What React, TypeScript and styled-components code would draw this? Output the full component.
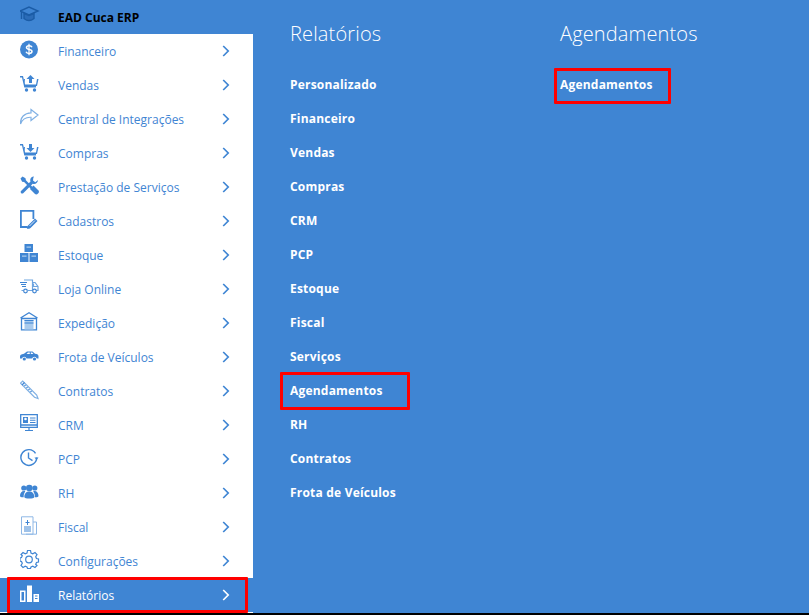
import { ReactNode } from 'react'
import styled, { createGlobalStyle } from 'styled-components'

const blue = '#3f85d3'

const GlobalStyle = createGlobalStyle`
  html, body {
    margin: 0;
    padding: 0;
    background: ${blue};
  }
  body {
    font-family: "Open Sans", "Liberation Sans", sans-serif;
  }
`

const Page = styled.div`
  width: 809px;
  height: 615px;
  display: flex;
  flex-direction: column;
  overflow: hidden;
`

const Body = styled.div`
  display: flex;
  height: 613px;
`

const BottomLine = styled.div`
  height: 2px;
  background: #000;
`

const Sidebar = styled.nav`
  width: 253px;
  display: flex;
  flex-direction: column;
  background: #fff;
`

const Brand = styled.div`
  height: 34px;
  flex: none;
  display: flex;
  align-items: center;
  padding-left: 20px;
  background: ${blue};
  color: #000;
  font-size: 12px;
  font-weight: 700;
`

const MenuRow = styled.div<{ $active?: boolean }>`
  height: 34px;
  flex: none;
  display: flex;
  align-items: center;
  padding-left: 20px;
  position: relative;
  font-size: 12px;
  color: ${(p) => (p.$active ? '#fff' : blue)};
  background: ${(p) => (p.$active ? blue : '#fff')};
`

const IconBox = styled.span`
  width: 20px;
  height: 20px;
  margin-right: 18px;
  margin-top: -3px;
  flex: none;
  display: block;
  svg {
    display: block;
  }
`

const Label = styled.span`
  flex: 1;
  margin-top: 1px;
`

const Chevron = styled.svg`
  width: 8px;
  height: 12px;
  margin-right: 23px;
`

const Marker = styled.span<{ $w: number; $h: number; $x: number; $y: number }>`
  position: absolute;
  left: ${(p) => p.$x}px;
  top: ${(p) => p.$y}px;
  width: ${(p) => p.$w}px;
  height: ${(p) => p.$h}px;
  box-sizing: border-box;
  border: 3px solid #f00;
  border-radius: 1px;
  pointer-events: none;
`

const Column = styled.section<{ $width: number }>`
  width: ${(p) => p.$width}px;
  flex: none;
  padding-left: 37px;
  display: flex;
  flex-direction: column;
  box-sizing: border-box;
`

const ColumnTitle = styled.h2`
  margin: 0 0 13px;
  height: 34px;
  padding-top: 20px;
  font-size: 20px;
  line-height: 28px;
  letter-spacing: 0.15px;
  font-weight: 300;
  color: #fff;
  box-sizing: content-box;
`

const LinkRow = styled.div`
  height: 34px;
  display: flex;
  align-items: center;
  position: relative;
  color: #fff;
  font-size: 12px;
  font-weight: 700;
  letter-spacing: 0.2px;
`

const Stroke = ({ children }: { children: ReactNode }) => (
  <svg width="20" height="20" viewBox="0 0 20 20" fill="none" stroke={blue} strokeWidth="1.2">
    {children}
  </svg>
)

const Solid = ({ children, color = blue }: { children: ReactNode; color?: string }) => (
  <svg width="20" height="20" viewBox="0 0 20 20" fill={color}>
    {children}
  </svg>
)

const Cart = ({ up }: { up?: boolean }) => (
  <Solid>
    <path d="M0 2h3l2.400 10h10.600v1.400H4.300L2 3.400H0z" />
    <path d="M4 5h1v5.500h11L17 5h1.500l-1.500 7H5z" />
    <circle cx="6.500" cy="16" r="1.700" />
    <circle cx="14.500" cy="16" r="1.700" />
    {up ? <path d="M10.500 1l4 4h-2.500v4h-3V5H6.500z" /> : <path d="M10.500 10l4-4h-2.500V2h-3v4H6.500z" />}
  </Solid>
)

const icons: Record<string, ReactNode> = {
  dollar: (
    <Solid>
      <circle cx="9" cy="9.500" r="9" />
      <path
        d="M12 7.300C11.500 6 10.500 5.700 9 5.700 7.500 5.700 6.500 6.500 6.500 7.600c0 2.600 5.500 1.400 5.500 4 0 1.100-1.200 1.800-3 1.800-1.500 0-2.500-.5-3-1.700"
        fill="none"
        stroke="#fff"
        strokeWidth="1.500"
      />
      <path d="M9 3.800v11.400" stroke="#fff" strokeWidth="1.200" />
    </Solid>
  ),
  cartUp: <Cart up />,
  share: (
    <Stroke>
      <path stroke="#7fb0e4" d="M11 1.500L18 7l-7 5.500V9.300C6 9 2.500 11 .5 16 0 9.500 4.500 5 11 4.800z" />
    </Stroke>
  ),
  cartDown: <Cart />,
  tools: (
    <Solid>
      <path d="M.5 2.500L2.500.5l3 1.800.4 2 9.600 9.600-1.800 1.800-9.600-9.600-2-.4z" />
      <path d="M13.500 9.500l5 5c1 1.200.2 2.300-.5 3-.8.700-1.900 1.400-3 .5l-5-5z" />
      <path d="M14 .5c-2.800 0-4.500 2.500-3.500 5L1 15c-1.200 1.300.9 3.400 2.200 2.200l9.500-9.500c2.500 1 5.300-.8 5.300-3.700l-2.700 2.200-2.300-1.700.3-2.600z" />
    </Solid>
  ),
  note: (
    <Stroke>
      <path strokeWidth="1.800" d="M7.500 17H.9V.9h12.500v8" />
      <path fill={blue} stroke="none" d="M8 15.500l7-7 2.500 2.500-7 7c-1 .8-2.500 1-3.500.8-.2-1-.1-2.500 1-3.300z" />
      <path stroke="#fff" strokeWidth=".8" d="M9.500 16l5.500-5.500" />
    </Stroke>
  ),
  boxes: (
    <Solid>
      <path d="M4.500 0H13v8H4.500zM0 9h8.500v9H0zM9.500 9H18v9H9.500z" />
      <path fill="#a9cbee" d="M6.500 2.500H11v1.200H6.500zM2 11.500h4.500v1.200H2zM11.500 11.500H16v1.200h-4.500z" />
    </Solid>
  ),
  truck: (
    <Stroke>
      <path stroke="#6ea5e0" d="M4 2h8.500v10M12.500 4.500h2.500l3 4v4h-2M3.500 12.500H1.500M8 12.500h5M13.500 5.500v3h4" />
      <path d="M0 4.500h7M1 6.500h5M2 8.500h4" />
      <circle cx="5.500" cy="13" r="1.800" />
      <circle cx="14.500" cy="13" r="1.800" />
    </Stroke>
  ),
  warehouse: (
    <Stroke>
      <path strokeWidth="1.300" d="M.5 6L9 .8 17.500 6M1.500 5.500v12.300h15V5.500M.8 6.500h16.400" />
      <path fill="#a9cbee" stroke="none" d="M4.500 8h9v9.500h-9z" />
      <path stroke={blue} d="M4.500 8.500h9M4.500 11h9" />
    </Stroke>
  ),
  car: (
    <Solid>
      <path d="M0 10.500c0-1.500 1-2.300 4-2.700L7 5.500h5.500l2.500 2.300c2.500.3 3.500.8 3.500 2.700v2h-1.800a2.300 2.300 0 0 0-4.500 0H6.500a2.300 2.300 0 0 0-4.500 0H0z" />
      <path fill="#fff" d="M8 6.600h1.800v1.400H6.500zM10.800 6.600h1.300l1.300 1.400h-2.600z" />
      <circle cx="4.300" cy="13" r="1.600" />
      <circle cx="14.500" cy="13" r="1.600" />
    </Solid>
  ),
  pen: (
    <Stroke>
      <path stroke="#7fb0e4" d="M.5 3.200L2.700 1l14 14 1.300 3.500-3.500-1.300z" />
      <path d="M2 5l2.500-2.500M4.500 6l1-1M6.500 8l1-1M8.500 10l1-1M10.500 12l1-1" />
    </Stroke>
  ),
  monitor: (
    <Stroke>
      <path strokeWidth="1.300" d="M.7.700h16.600v12.600H.7zM.7 11h16.600" />
      <path stroke={blue} d="M9 13.500v2.500M5 16.500h8" />
      <path fill={blue} stroke="none" d="M3 3h5v6H3zM10 3.500h5.500v1H10zM10 5.700h5.500v1H10zM10 7.900h5.500v1H10z" />
      <circle cx="5.500" cy="5" r="1.300" fill="#fff" stroke="none" />
    </Stroke>
  ),
  clock: (
    <Stroke>
      <path strokeWidth="1.400" d="M16.700 9.500A7.900 7.900 0 1 1 15.500 5.300" />
      <path strokeWidth="1.400" d="M8.500 4.500V10l4 2.700" />
      <path fill={blue} stroke="none" d="M14.500 9.500h4l-2 2.500z" />
    </Stroke>
  ),
  people: (
    <Solid>
      <circle cx="3.800" cy="6" r="2.600" />
      <circle cx="14.800" cy="6" r="2.600" />
      <circle cx="9.300" cy="6" r="3.300" />
      <path d="M0 14c0-3 1.500-5 4-5 .7 0 1 .2 1.300.4C4 11 3.500 13 3.700 15.200 1.500 15.300 0 15 0 14zM18.500 14c0-3-1.500-5-4-5-.7 0-1 .2-1.300.4 1.300 1.600 1.800 3.600 1.600 5.800 2.200.1 3.700-.2 3.700-1.200z" />
      <path d="M4.300 15c0-3.500 2-5.500 5-5.500s5 2 5 5.500c0 2-10 2-10 0z" />
    </Solid>
  ),
  receipt: (
    <Stroke>
      <path strokeWidth="1" stroke="#8fb8e6" d="M1.500.8h11.500v17.400H1.500zM13 6h3.500v12.200H6" />
      <path strokeWidth="1" d="M4 11h7M4 13h7M4 15h7" />
      <path strokeWidth="1" d="M7.500 4v5M5.500 6.500h4" />
    </Stroke>
  ),
  gear: (
    <Stroke>
      <circle cx="9" cy="9.500" r="3.300" />
      <path d="M7.500 1h3l.5 2.500 1.800.8L15 3l2 2-1.300 2.200.8 1.800 2 .5v3l-2 .5-.8 1.800L17 16l-2 2-2.200-1.300-1.800.8-.5 1.500h-3L7 17.500l-1.800-.8L3 18l-2-2 1.300-2.200-.8-1.800L0 11.500v-3L1.500 8l.8-1.800L1 5l2-2 2.200 1.300L7 3.500z" transform="translate(0 -.5)" />
    </Stroke>
  ),
  bars: (
    <Solid color="#fff">
      <path fillRule="evenodd" d="M0 6.500h5.500V18H0zM1.500 8v8.500h2.500V8z" />
      <path d="M7 1.500h5V18H7z" />
      <path fillRule="evenodd" d="M13.500 10H19v8h-5.500zM15 11.500v1h2.500v-1zM15 14v1h2.500v-1z" />
    </Solid>
  ),
}

const menu = [
  { label: 'Financeiro', icon: 'dollar' },
  { label: 'Vendas', icon: 'cartUp' },
  { label: 'Central de Integrações', icon: 'share' },
  { label: 'Compras', icon: 'cartDown' },
  { label: 'Prestação de Serviços', icon: 'tools' },
  { label: 'Cadastros', icon: 'note' },
  { label: 'Estoque', icon: 'boxes' },
  { label: 'Loja Online', icon: 'truck' },
  { label: 'Expedição', icon: 'warehouse' },
  { label: 'Frota de Veículos', icon: 'car' },
  { label: 'Contratos', icon: 'pen' },
  { label: 'CRM', icon: 'monitor' },
  { label: 'PCP', icon: 'clock' },
  { label: 'RH', icon: 'people' },
  { label: 'Fiscal', icon: 'receipt' },
  { label: 'Configurações', icon: 'gear' },
  { label: 'Relatórios', icon: 'bars', active: true },
]

const reports = [
  'Personalizado',
  'Financeiro',
  'Vendas',
  'Compras',
  'CRM',
  'PCP',
  'Estoque',
  'Fiscal',
  'Serviços',
  'Agendamentos',
  'RH',
  'Contratos',
  'Frota de Veículos',
]

export default function App() {
  return (
    <Page>
      <GlobalStyle />
      <Body>
        <Sidebar>
          <Brand>
            <IconBox>
              <svg width="20" height="20" viewBox="0 0 20 20" fill="none" stroke="#1b5ca6" strokeWidth="1.400">
                <path d="M0 5l9-4 9 4-9 4z" />
                <path fill="#2b6cb8" d="M4 7.500v5c3 2.500 7 2.500 10 0v-5L9 9.500z" />
                <path d="M1.500 6v7" />
              </svg>
            </IconBox>
            <Label>EAD Cuca ERP</Label>
          </Brand>
          {menu.map((item) => (
            <MenuRow key={item.label} $active={item.active}>
              <IconBox>{icons[item.icon]}</IconBox>
              <Label>{item.label}</Label>
              <Chevron viewBox="0 0 8 12" fill="none" stroke={item.active ? '#fff' : blue} strokeWidth="1.700">
                <path d="M1.200 1l5 5-5 5" />
              </Chevron>
              {item.active && <Marker $x={7} $y={-1} $w={241} $h={36} />}
            </MenuRow>
          ))}
        </Sidebar>
        <Column $width={270}>
          <ColumnTitle>Relatórios</ColumnTitle>
          {reports.map((r) => (
            <LinkRow key={r}>
              {r}
              {r === 'Agendamentos' && <Marker $x={-10} $y={-1} $w={130} $h={38} />}
            </LinkRow>
          ))}
        </Column>
        <Column $width={286}>
          <ColumnTitle>Agendamentos</ColumnTitle>
          <LinkRow>
            Agendamentos
            <Marker $x={-6} $y={1} $w={117} $h={36} />
          </LinkRow>
        </Column>
      </Body>
      <BottomLine />
    </Page>
  )
}
